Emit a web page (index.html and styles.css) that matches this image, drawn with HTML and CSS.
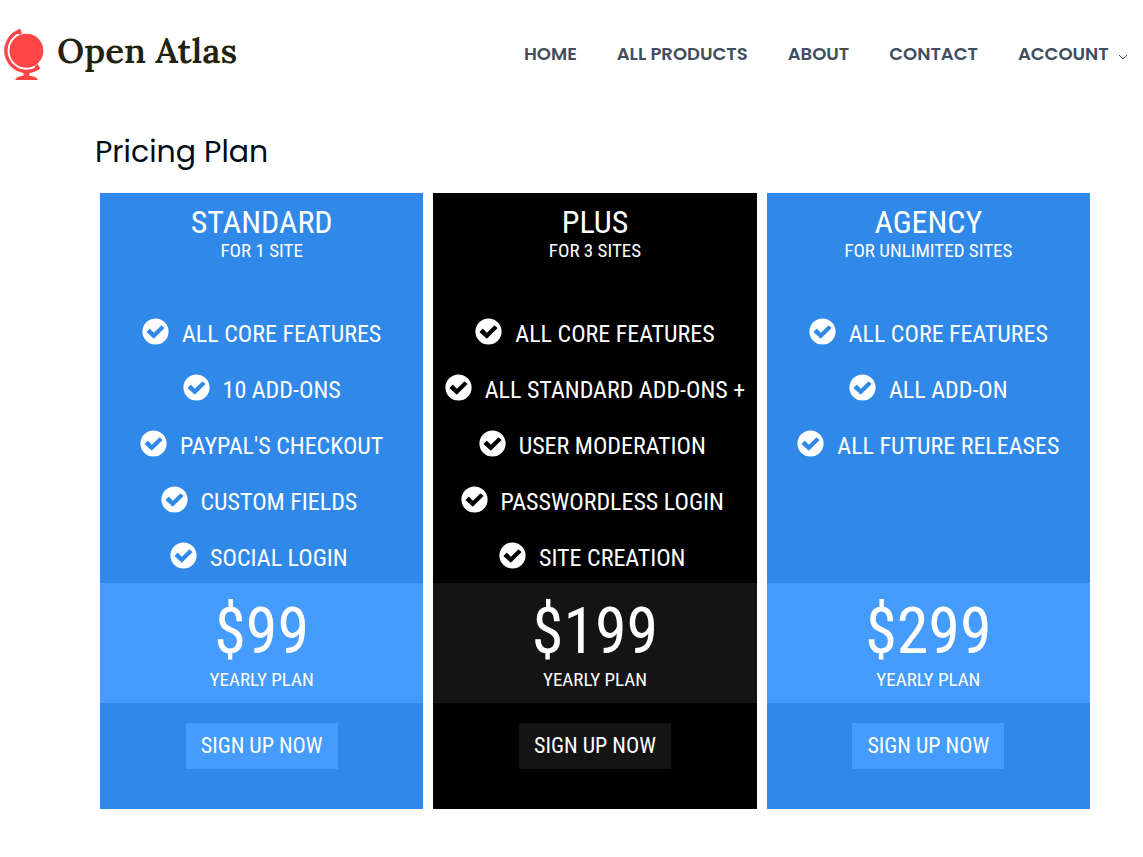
FILE: index.html
```
<!DOCTYPE html>
<html lang="en">
<head>
    <meta charset="UTF-8">
    <meta name="viewport" content="width=device-width, initial-scale=1.0">
    <title>Pricing Plan - Open Atlas</title>
    <link rel="stylesheet" href="styles.css">
</head>
<body>
    <!-- Shared icons -->
    <svg class="icon-defs" aria-hidden="true">
        <symbol id="icon-check" viewBox="0 0 27 27">
            <path fill-rule="evenodd" d="M13.500.4a13.100 13.100 0 1 1 0 26.200a13.100 13.100 0 1 1 0-26.200zM7.300 11.100L4.900 13.500a.6.6 0 0 0 0 .9L11.300 20.200a.7.7 0 0 0 1 0L22.100 10.500a.6.6 0 0 0 0-.9L19.900 7.700a.6.6 0 0 0-.9 0L11.900 14.800L8.200 11.100a.6.6 0 0 0-.9 0z"/>
        </symbol>
    </svg>

    <header class="site-header">
        <a class="logo" href="#">
            <svg class="logo-icon" viewBox="0 0 42 52" aria-hidden="true">
                <circle cx="23.400" cy="22.700" r="17"/>
                <path class="logo-arm" d="M16.300 3.100A20.800 20.800 0 1 0 35 40"/>
                <path class="logo-arm" d="M17.400 6.200L15.700 1.400M33 37L36 41.200"/>
                <path d="M20.500 44h6v3.800c4.500.3 7.500 1.600 8.500 4.200H12c1-2.600 4-3.900 8.500-4.200z"/>
            </svg>
            <span class="logo-text">Open Atlas</span>
        </a>
        <nav class="main-nav">
            <a href="#">HOME</a>
            <a href="#">ALL PRODUCTS</a>
            <a href="#">ABOUT</a>
            <a href="#">CONTACT</a>
            <a href="#">ACCOUNT
                <svg class="chevron" viewBox="0 0 10 6" aria-hidden="true"><path d="M1 1l4 4 4-4"/></svg>
            </a>
        </nav>
    </header>

    <main class="pricing">
        <h1>Pricing Plan</h1>

        <div class="plans">
            <section class="plan">
                <h2>STANDARD</h2>
                <p class="plan-sites">FOR 1 SITE</p>
                <ul class="features">
                    <li><svg class="check"><use href="#icon-check"/></svg>ALL CORE FEATURES</li>
                    <li><svg class="check"><use href="#icon-check"/></svg>10 ADD-ONS</li>
                    <li><svg class="check"><use href="#icon-check"/></svg>PAYPAL'S CHECKOUT</li>
                    <li><svg class="check"><use href="#icon-check"/></svg>CUSTOM FIELDS&nbsp;</li>
                    <li><svg class="check"><use href="#icon-check"/></svg>SOCIAL LOGIN&nbsp;</li>
                </ul>
                <div class="price">
                    <p class="amount">$99</p>
                    <p class="period">YEARLY PLAN</p>
                </div>
                <button type="button" class="btn-signup">SIGN UP NOW</button>
            </section>

            <section class="plan plan-dark">
                <h2>PLUS</h2>
                <p class="plan-sites">FOR 3 SITES</p>
                <ul class="features">
                    <li><svg class="check"><use href="#icon-check"/></svg>ALL CORE FEATURES</li>
                    <li><svg class="check"><use href="#icon-check"/></svg>ALL STANDARD ADD-ONS +</li>
                    <li><svg class="check"><use href="#icon-check"/></svg>USER MODERATION&nbsp;</li>
                    <li><svg class="check"><use href="#icon-check"/></svg>PASSWORDLESS LOGIN&nbsp;</li>
                    <li><svg class="check"><use href="#icon-check"/></svg>SITE CREATION&nbsp;</li>
                </ul>
                <div class="price">
                    <p class="amount">$199</p>
                    <p class="period">YEARLY PLAN</p>
                </div>
                <button type="button" class="btn-signup">SIGN UP NOW</button>
            </section>

            <section class="plan">
                <h2>AGENCY</h2>
                <p class="plan-sites">FOR UNLIMITED SITES</p>
                <ul class="features">
                    <li><svg class="check"><use href="#icon-check"/></svg>ALL CORE FEATURES</li>
                    <li><svg class="check"><use href="#icon-check"/></svg>ALL ADD-ON</li>
                    <li><svg class="check"><use href="#icon-check"/></svg>ALL FUTURE RELEASES</li>
                </ul>
                <div class="price">
                    <p class="amount">$299</p>
                    <p class="period">YEARLY PLAN</p>
                </div>
                <button type="button" class="btn-signup">SIGN UP NOW</button>
            </section>
        </div>
    </main>
</body>
</html>
```
FILE: styles.css
```
* { margin: 0; padding: 0; box-sizing: border-box; }

body {
    font-family: Poppins, Inter, sans-serif;
    background: #fff;
    color: #000d15;
}

a {
    color: inherit;
    text-decoration: none;
}

.icon-defs {
    display: none;
}

/* Header */
.site-header {
    display: flex;
    align-items: center;
    justify-content: space-between;
    padding: 28px 15px 28px 3px;
}

.logo {
    display: flex;
    align-items: flex-start;
    gap: 12px;
    color: #1f2310;
}

.logo-icon {
    width: 42px;
    height: 52px;
    fill: #ff4545;
}

.logo-arm {
    fill: none;
    stroke: #ff4545;
    stroke-width: 3.400;
}

.logo-text {
    font-family: Lora, "Liberation Serif", serif;
    font-size: 35px;
    font-weight: 600;
    line-height: 46px;
}

.main-nav {
    display: flex;
    gap: 40px;
    padding-bottom: 2px;
    color: #3f4f5f;
    font-size: 18px;
    font-weight: 600;
}

.chevron {
    width: 10px;
    height: 6px;
    margin-left: 5px;
    fill: none;
    stroke: currentColor;
}

/* Pricing table */
.pricing {
    padding: 20px 48px 48px 95px;
}

.pricing h1 {
    font-size: 30px;
    font-weight: 400;
    line-height: 48px;
    margin-bottom: 17px;
}

.plans {
    display: grid;
    grid-template-columns: repeat(3, 1fr);
    gap: 10px;
    padding: 0 5px;
}

.plan {
    display: flex;
    flex-direction: column;
    align-items: center;
    padding: 12px 0 40px;
    background: #3089e8;
    color: #fff;
    font-family: "Roboto Condensed", "Liberation Sans Narrow", Roboto, sans-serif;
    text-align: center;
}

.plan h2 {
    font-size: 32px;
    font-weight: 400;
    line-height: 34px;
}

.plan-sites, .period {
    font-size: 19px;
    line-height: 24px;
}

.features {
    display: flex;
    flex-direction: column;
    flex: 1;
    gap: 28px;
    margin: 57px 0 11px;
    list-style: none;
    font-size: 24px;
    line-height: 28px;
}

.features li {
    display: flex;
    justify-content: center;
    gap: 13px;
    white-space: nowrap;
}

.check {
    width: 27px;
    height: 27px;
    margin-top: -2px;
    fill: #fff;
}

.price {
    width: 100%;
    padding: 17px 0 11px;
    background: #459cfc;
}

.amount {
    font-size: 64px;
    line-height: 64px;
    margin-bottom: 4px;
}

.btn-signup {
    margin-top: 20px;
    padding: 10px 15px;
    border: none;
    background: #459cfc;
    color: #fff;
    font-family: inherit;
    font-size: 22px;
    line-height: 26px;
    cursor: pointer;
}

.plan-dark {
    background: #000;
}

.plan-dark .price, .plan-dark .btn-signup {
    background: #141414;
}
```
